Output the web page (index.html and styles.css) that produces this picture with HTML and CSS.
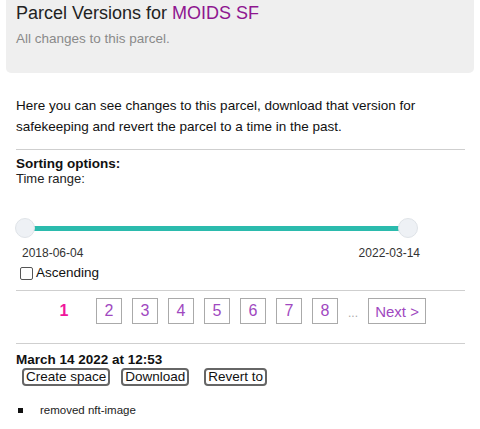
FILE: index.html
```html
<!DOCTYPE html>
<html>
<head>
<meta charset="utf-8">
<link rel="stylesheet" href="styles.css">
</head>
<body>
<div class="page">
  <header class="hero">
    <h1 class="title">Parcel Versions for <a class="parcel-link" href="#">MOIDS SF</a></h1>
    <p class="subtitle">All changes to this parcel.</p>
  </header>
  <section class="content">
    <p class="intro">Here you can see changes to this parcel, download that version for safekeeping and revert the parcel to a time in the past.</p>
    <hr class="rule">
    <div class="sorting">
      <div class="sort-title">Sorting options:</div>
      <div class="sort-label">Time range:</div>
      <div class="slider">
        <div class="track"></div>
        <span class="thumb thumb-left"></span>
        <span class="thumb thumb-right"></span>
      </div>
      <div class="dates">
        <span>2018-06-04</span>
        <span>2022-03-14</span>
      </div>
      <label class="asc"><span class="checkbox"></span>Ascending</label>
    </div>
    <hr class="rule rule-mid">
    <nav class="pager">
      <span class="page-current">1</span>
      <a class="page-box" href="#">2</a>
      <a class="page-box" href="#">3</a>
      <a class="page-box" href="#">4</a>
      <a class="page-box" href="#">5</a>
      <a class="page-box" href="#">6</a>
      <a class="page-box" href="#">7</a>
      <a class="page-box" href="#">8</a>
      <span class="ellipsis">...</span>
      <a class="page-box page-next" href="#">Next &gt;</a>
    </nav>
    <hr class="rule rule-bottom">
    <div class="version">
      <div class="version-date">March 14 2022 at 12:53</div>
      <div class="actions">
        <button class="btn btn-create">Create space</button>
        <button class="btn btn-download">Download</button>
        <button class="btn">Revert to</button>
      </div>
      <ul class="changes">
        <li class="change">removed nft-image</li>
      </ul>
    </div>
  </section>
</div>
</body>
</html>
```
FILE: styles.css
```css
html, body {
  margin: 0;
  padding: 0;
  background: #fff;
}
body {
  font-family: "Liberation Sans", Arial, sans-serif;
  color: #111;
  width: 480px;
  height: 429px;
  overflow: hidden;
}
.page {
  padding: 0 6px;
}
.hero {
  background: #efefef;
  border-radius: 0 0 5px 5px;
  height: 73px;
  padding: 0 10px;
  box-sizing: border-box;
}
.title {
  margin: 0;
  padding-top: 2px;
  font-size: 18px;
  font-weight: normal;
  line-height: 22px;
  color: #222;
}
.parcel-link {
  color: #8e168f;
  text-decoration: none;
}
.subtitle {
  margin: 7px 0 0;
  font-size: 13.5px;
  line-height: 16px;
  color: #8a8a8a;
}
.content {
  padding: 0 9px 0 10px;
}
.intro {
  margin: 22px 0 0;
  font-size: 13.5px;
  line-height: 21px;
  color: #111;
}
.rule {
  border: 0;
  border-top: 1px solid #cfcfcf;
  margin: 12px 0 0;
  height: 0;
}
.sorting {
  padding-top: 6px;
}
.sort-title {
  font-size: 13.5px;
  font-weight: bold;
  line-height: 15px;
}
.sort-label {
  font-size: 13px;
  line-height: 15px;
  color: #222;
}
.slider {
  position: relative;
  height: 20px;
  margin: 32px 0 0 0;
}
.track {
  position: absolute;
  left: 9px;
  right: 58px;
  top: 8px;
  height: 5px;
  background: #2bbbad;
}
.thumb {
  position: absolute;
  top: 0;
  width: 18px;
  height: 18px;
  border-radius: 50%;
  background: #eef1f5;
  border: 1px solid #dfe3e8;
}
.thumb-left { left: -1px; }
.thumb-right { left: 382px; }
.dates {
  display: flex;
  justify-content: space-between;
  width: 398px;
  margin: 8px 0 0 6px;
  font-size: 12px;
  line-height: 14px;
  color: #333;
}
.asc {
  display: flex;
  align-items: center;
  margin: 5px 0 0 4px;
  font-size: 13.5px;
  line-height: 16px;
  color: #111;
}
.checkbox {
  width: 11px;
  height: 11px;
  border: 1px solid #555;
  border-radius: 2px;
  margin-right: 3px;
  background: #fff;
}
.rule-mid {
  margin-top: 9px;
}
.pager {
  display: flex;
  align-items: center;
  padding: 7px 0 0 35px;
  height: 26px;
}
.page-current {
  font-size: 16px;
  font-weight: bold;
  color: #f0169b;
  width: 26px;
  text-align: center;
  margin-right: 19px;
}
.page-box {
  box-sizing: border-box;
  height: 26px;
  min-width: 26px;
  padding: 0 6px;
  border: 1px solid #aaa;
  display: flex;
  align-items: center;
  justify-content: center;
  font-size: 16px;
  color: #a048c0;
  text-decoration: none;
  margin-right: 10px;
  white-space: nowrap;
}
.ellipsis {
  color: #aaa;
  font-size: 12px;
  margin: 4px 10px 0 0;
}
.page-next {
  margin-right: 0;
  width: 58px;
  padding: 0;
  font-size: 15px;
}
.rule-bottom {
  margin-top: 19px;
}
.version {
  padding-top: 8px;
}
.version-date {
  font-size: 13.5px;
  font-weight: bold;
  line-height: 15px;
}
.actions {
  display: flex;
  margin: 1px 0 0 6px;
}
.btn {
  font-family: "Liberation Sans", Arial, sans-serif;
  font-size: 13.5px;
  line-height: 14px;
  padding: 0 2px;
  height: auto;
  border: 2px solid #666;
  border-radius: 4px;
  background: #fff;
  color: #111;
}
.btn-create { margin-right: 11px; }
.btn-download { margin-right: 15px; }
.changes {
  margin: 17px 0 0;
  padding: 0;
  list-style: none;
}
.change {
  display: flex;
  align-items: center;
  font-size: 11.5px;
  line-height: 14px;
  color: #222;
}
.change::before {
  content: "";
  width: 5px;
  height: 5px;
  background: #111;
  margin: 1px 17px 0 2px;
}
```
